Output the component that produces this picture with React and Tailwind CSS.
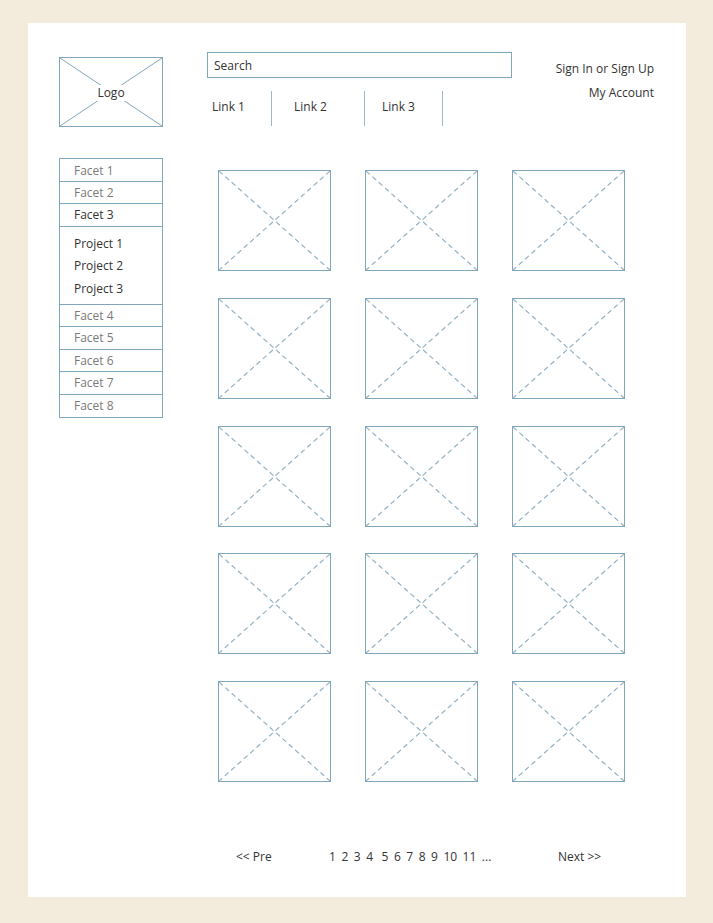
import React from 'react';

const line = '#7fa6bb';

const Placeholder = () => (
  <div className="relative h-[101px] w-[113px] border border-[#7fa6bb]">
    <svg className="absolute inset-0 h-full w-full" viewBox="0 0 100 100" preserveAspectRatio="none">
      <line x1="0" y1="0" x2="100" y2="100" stroke="#93b1c3" strokeWidth="1.2" strokeDasharray="5 3.5" vectorEffect="non-scaling-stroke" />
      <line x1="100" y1="0" x2="0" y2="100" stroke="#93b1c3" strokeWidth="1.2" strokeDasharray="5 3.5" vectorEffect="non-scaling-stroke" />
    </svg>
  </div>
);

const facetsTop = ['Facet 1', 'Facet 2'];
const facetsBottom = ['Facet 4', 'Facet 5', 'Facet 6', 'Facet 7', 'Facet 8'];
const projects = ['Project 1', 'Project 2', 'Project 3'];
const pages = ['1', '2', '3', '4', '5', '6', '7', '8', '9', '10', '11', '...'];

export default function App() {
  return (
    <div
      className="min-h-screen bg-[#f3ecdc] pt-[23px] pb-[26px] pl-[28px] pr-[27px] text-[12px] text-[#333]"
      style={{ fontFamily: '"Open Sans", "Liberation Sans", sans-serif' }}
    >
      <div className="flex h-[874px] flex-col bg-white pl-[31px]">
        {/* header */}
        <div className="flex items-start pt-[29px]">
          <div className="relative mt-[5px] flex h-[70px] w-[104px] items-center justify-center border border-[#7fa6bb] pt-[2px]">
            <svg className="absolute inset-0 h-full w-full" viewBox="0 0 100 100" preserveAspectRatio="none">
              <line x1="0" y1="0" x2="100" y2="100" stroke={line} strokeWidth="1" vectorEffect="non-scaling-stroke" />
              <line x1="100" y1="0" x2="0" y2="100" stroke={line} strokeWidth="1" vectorEffect="non-scaling-stroke" />
            </svg>
            <span className="relative bg-white px-[3px] leading-[16px]">Logo</span>
          </div>

          <div className="ml-[44px] w-[305px]">
            <div className="flex h-[26px] items-center border border-[#7fa6bb] px-[6px] pt-[1px]">Search</div>
            <div className="mt-[13px] flex h-[35px]">
              <div className="flex w-[65px] items-center border-r border-[#9db8c8] pb-[3px] pl-[5px]">Link 1</div>
              <div className="flex w-[93px] items-center border-r border-[#9db8c8] pb-[3px] pl-[22px]">Link 2</div>
              <div className="flex w-[78px] items-center border-r border-[#9db8c8] pb-[3px] pl-[17px]">Link 3</div>
            </div>
          </div>

          <div className="ml-auto flex flex-col items-end gap-[7px] pr-[32px] pt-[8px] leading-[17px]">
            <span>Sign In or Sign Up</span>
            <span>My Account</span>
          </div>
        </div>

        {/* body */}
        <div className="mt-[31px] flex items-start">
          <div className="w-[104px] border border-[#7fa6bb]">
            {facetsTop.map((f) => (
              <div key={f} className="flex h-[22.5px] items-center border-b border-[#7fa6bb] pl-[14px] pt-[2px] text-[#7a7a7a]">
                {f}
              </div>
            ))}
            <div className="flex h-[22.5px] items-center border-b border-[#7fa6bb] pl-[14px] pt-[1px]">Facet 3</div>
            <div className="flex h-[78px] flex-col border-b border-[#7fa6bb] pl-[14px] pt-[6px]">
              {projects.map((p) => (
                <div key={p} className="flex h-[22.5px] items-center">
                  {p}
                </div>
              ))}
            </div>
            {facetsBottom.map((f, i) => (
              <div
                key={f}
                className={`flex h-[22.5px] items-center pl-[14px] pt-[1px] text-[#7a7a7a] ${i < facetsBottom.length - 1 ? 'border-b border-[#7fa6bb]' : ''}`}
              >
                {f}
              </div>
            ))}
          </div>

          <div className="ml-[55px] mt-[12px] grid grid-cols-[113px_113px_113px] gap-x-[34px] gap-y-[26.75px]">
            {Array.from({ length: 15 }).map((_, i) => (
              <Placeholder key={i} />
            ))}
          </div>
        </div>

        {/* pagination */}
        <div className="mt-auto flex items-center pb-[32px] pl-[177px] leading-[17px]">
          <span className="w-[93px]">&lt;&lt; Pre</span>
          <div className="flex w-[229px] gap-[5.5px]">
            {pages.map((p) => (
              <span key={p} className={p === '5' ? 'ml-[3px]' : ''}>
                {p}
              </span>
            ))}
          </div>
          <span>Next &gt;&gt;</span>
        </div>
      </div>
    </div>
  );
}
